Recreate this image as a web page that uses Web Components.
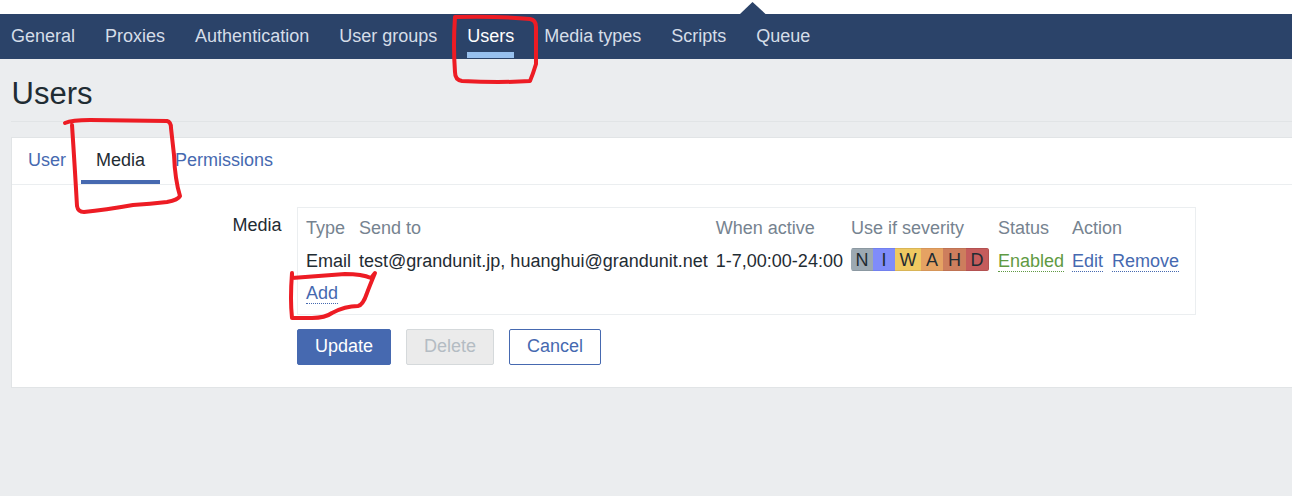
<!DOCTYPE html>
<html>
<head>
<meta charset="utf-8">
<title>Users</title>
<style>
    html, body { margin: 0; overflow: hidden; height: 496px; }
    body {
        position: relative;
        background: #ebedef;
        color: #1f2c33;
        font: 18px/26px "Liberation Sans", Arial, sans-serif;
    }
    .buttons { display: flex; gap: 15px; }
</style>
</head>
<body>
<admin-nav>
    <nav-item>General</nav-item>
    <nav-item>Proxies</nav-item>
    <nav-item>Authentication</nav-item>
    <nav-item>User groups</nav-item>
    <nav-item active>Users</nav-item>
    <nav-item>Media types</nav-item>
    <nav-item>Scripts</nav-item>
    <nav-item>Queue</nav-item>
</admin-nav>
<page-title>Users</page-title>
<tab-card>
    <tab-item slot="tabs">User</tab-item>
    <tab-item slot="tabs" active>Media</tab-item>
    <tab-item slot="tabs">Permissions</tab-item>
    <form-row label="Media"><media-table></media-table></form-row>
    <form-row>
        <div class="buttons">
            <z-button kind="primary">Update</z-button>
            <z-button kind="disabled">Delete</z-button>
            <z-button kind="outline">Cancel</z-button>
        </div>
    </form-row>
</tab-card>
<ink-marks></ink-marks>

<script>
class AdminNav extends HTMLElement {
    constructor() {
        super();
        this.attachShadow({ mode: 'open' });
        this.shadowRoot.innerHTML = `
        <style>
            :host { display: block; padding-top: 14px; background: #fff; position: relative; }
            .bar { display: flex; gap: 30px; height: 45px; padding-left: 11px; background: #2b4369; }
            svg { position: absolute; left: 740px; top: 2px; }
        </style>
        <svg width="26" height="12" viewBox="0 0 26 12"><path d="M0 12 L12.5 0 L25.5 12 Z" fill="#2b4369"/></svg>
        <div class="bar"><slot></slot></div>`;
    }
}
class NavItem extends HTMLElement {
    constructor() {
        super();
        this.attachShadow({ mode: 'open' });
        this.shadowRoot.innerHTML = `
        <style>
            :host { display: block; box-sizing: border-box; height: 44px; padding-top: 9px; color: #d5dde8; border-bottom: 6px solid transparent; }
            :host([active]) { color: #fff; border-bottom-color: #97c0ee; }
        </style>
        <slot></slot>`;
    }
}
class PageTitle extends HTMLElement {
    constructor() {
        super();
        this.attachShadow({ mode: 'open' });
        this.shadowRoot.innerHTML = `
        <style>
            :host { display: block; margin-left: 11px; height: 63px; box-sizing: border-box; border-bottom: 1px solid #e1e4e6; padding: 17px 0 0 0.5px; font-size: 31px; line-height: 36px; color: #1f2c33; }
        </style>
        <slot></slot>`;
    }
}
class TabCard extends HTMLElement {
    constructor() {
        super();
        this.attachShadow({ mode: 'open' });
        this.shadowRoot.innerHTML = `
        <style>
            :host { display: block; box-sizing: border-box; height: 251px; margin: 15px -2px 0 11px; background: #fff; border: 1px solid #e1e4e6; }
            .tabs { display: flex; height: 47px; box-sizing: border-box; padding-left: 1px; border-bottom: 1px solid #ebeef0; }
            .body { display: grid; row-gap: 14px; padding-top: 22px; }
        </style>
        <div class="tabs"><slot name="tabs"></slot></div>
        <div class="body"><slot></slot></div>`;
    }
}
class TabItem extends HTMLElement {
    constructor() {
        super();
        this.attachShadow({ mode: 'open' });
        this.shadowRoot.innerHTML = `
        <style>
            :host { display: block; box-sizing: border-box; height: 46px; padding: 9px 15px 0; color: #4669b0; border-bottom: 4px solid transparent; }
            :host([active]) { color: #1f2c33; border-bottom-color: #4669b0; }
        </style>
        <slot></slot>`;
    }
}
class FormRow extends HTMLElement {
    constructor() {
        super();
        this.attachShadow({ mode: 'open' });
        this.shadowRoot.innerHTML = `
        <style>
            :host { display: grid; grid-template-columns: 269.5px 899px; column-gap: 15.5px; }
            .label { text-align: right; padding-top: 5px; }
        </style>
        <div class="label"></div>
        <div><slot></slot></div>`;
        this.shadowRoot.querySelector('.label').textContent = this.getAttribute('label') || '';
    }
}
class SeverityBar extends HTMLElement {
    constructor() {
        super();
        this.attachShadow({ mode: 'open' });
        const levels = [
            ['N', 22, '#9ca9b2', '#8b98a1'],
            ['I', 22, '#7f8cfa', '#7280ee'],
            ['W', 26, '#eec961', '#d9b557'],
            ['A', 22, '#e5a263', '#d69659'],
            ['H', 23, '#cd7e5d', '#bf7354'],
            ['D', 23, '#c55c5c', '#b35151']
        ];
        this.shadowRoot.innerHTML = `
        <style>
            :host { display: flex; height: 23px; margin-bottom: 3px; border-radius: 3px; overflow: hidden; line-height: 22px; font-size: 18px; color: #1f2c33; }
            span { display: block; box-sizing: border-box; text-align: center; border-top: 1px solid; border-bottom: 1px solid; }
            span:first-child { border-left: 1px solid; }
            span:last-child { border-right: 1px solid; }
        </style>
        ${levels.map(l => `<span style="width:${l[1]}px;background:${l[2]};border-color:${l[3]}">${l[0]}</span>`).join('')}`;
    }
}
class MediaTable extends HTMLElement {
    constructor() {
        super();
        this.attachShadow({ mode: 'open' });
        this.shadowRoot.innerHTML = `
        <style>
            :host { display: block; box-sizing: border-box; height: 108px; padding: 7px 8px 0; border: 1px solid #ebeef0; }
            table { border-collapse: collapse; white-space: nowrap; }
            th, td { padding: 0 8px 0 0; text-align: left; font-weight: normal; vertical-align: middle; }
            .sev { padding-right: 9px; }
            th { color: #768390; padding-bottom: 7px; }
            tbody tr:first-child td { padding-bottom: 6px; }
            a { color: #4669b0; border-bottom: 1px dotted #4669b0; text-decoration: none; }
            a.green { color: #5f9a43; border-bottom-color: #5f9a43; }
            a + a { margin-left: 4px; }
        </style>
        <table>
            <thead><tr>
                <th>Type</th><th>Send to</th><th>When active</th><th class="sev">Use if severity</th><th>Status</th><th>Action</th>
            </tr></thead>
            <tbody>
                <tr>
                    <td>Email</td>
                    <td>test@grandunit.jp, huanghui@grandunit.net</td>
                    <td>1-7,00:00-24:00</td>
                    <td class="sev"><severity-bar></severity-bar></td>
                    <td><a class="green">Enabled</a></td>
                    <td><a>Edit</a> <a>Remove</a></td>
                </tr>
                <tr><td colspan="6"><a>Add</a></td></tr>
            </tbody>
        </table>`;
    }
}
class ZButton extends HTMLElement {
    constructor() {
        super();
        this.attachShadow({ mode: 'open' });
        this.shadowRoot.innerHTML = `
        <style>
            :host { display: block; box-sizing: border-box; height: 36px; padding: 0 17px; border: 1px solid; border-radius: 2px; line-height: 32px; }
            :host([kind=primary]) { background: #4669b0; border-color: #4669b0; color: #fff; }
            :host([kind=disabled]) { background: #ebebeb; border-color: #d5d9db; color: #b4bcc3; }
            :host([kind=outline]) { background: #fff; border-color: #4669b0; color: #4669b0; }
        </style>
        <slot></slot>`;
    }
}
// hand drawn red circles from the original screenshot
class InkMarks extends HTMLElement {
    constructor() {
        super();
        this.attachShadow({ mode: 'open' });
        this.shadowRoot.innerHTML = `
        <style>
            :host { position: absolute; left: 0; top: 0; width: 1292px; height: 496px; pointer-events: none; }
            path { fill: none; stroke: #ed1c24; stroke-width: 4; stroke-linecap: round; stroke-linejoin: round; }
        </style>
        <svg width="1292" height="496" viewBox="0 0 1292 496">
            <path d="M455 17 Q500 16 530 19 Q536 20 536 27 L536 64 Q533 74 530 81 Q500 83 462 81 Q455 80 455 72 Q453 45 455 17"/>
            <path d="M65 123 Q72 120 90 120 L167 121 Q171 122 171 128 L174 155 Q175 180 180 196 Q178 200 167 202 Q150 204 133 205 Q105 210 84 212 Q78 212 77 206 Q75 170 72 125"/>
            <path d="M292 273 L292 278 Q320 276 345 274 Q362 274 371 278 L375 273 Q370 285 367 293 Q363 305 358 306 Q345 306 332 313 Q325 318 312 318 L292 318 Q290 300 292 273"/>
        </svg>`;
    }
}
customElements.define('admin-nav', AdminNav);
customElements.define('nav-item', NavItem);
customElements.define('page-title', PageTitle);
customElements.define('tab-card', TabCard);
customElements.define('tab-item', TabItem);
customElements.define('form-row', FormRow);
customElements.define('severity-bar', SeverityBar);
customElements.define('media-table', MediaTable);
customElements.define('z-button', ZButton);
customElements.define('ink-marks', InkMarks);
</script>
</body>
</html>
